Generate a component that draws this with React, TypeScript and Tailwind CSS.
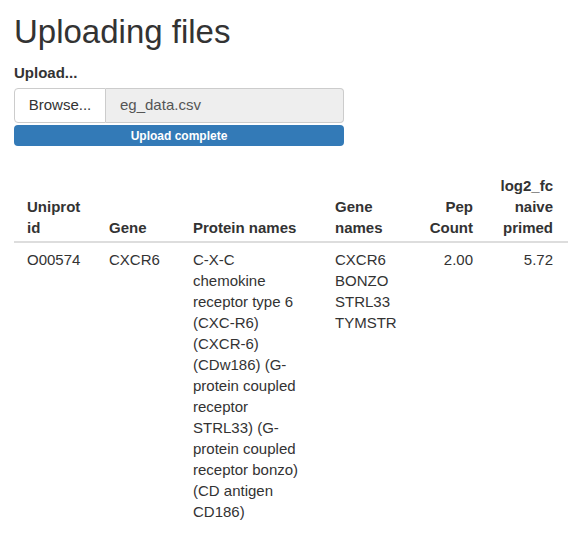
export default function App() {
  const font = { fontFamily: '"Liberation Sans", Arial, sans-serif' }
  return (
    <div className="min-h-[536px] w-[568px] overflow-hidden bg-white text-[15px] text-[#333]" style={font}>
      <div className="pl-[14px]">
        <h1 className="pt-[14px] text-[33px] leading-[36px] font-normal text-[#333]">Uploading files</h1>

        <div className="mt-[12px] w-[330px]">
          <div className="font-bold leading-[21px]">Upload...</div>
          <div className="mt-[5px] flex h-[35px]">
            <div className="flex w-[92px] items-center justify-center rounded-l-[4px] border border-[#ccc] bg-white text-[#333]">
              Browse...
            </div>
            <div className="flex flex-1 items-center rounded-r-[4px] border border-l-0 border-[#ccc] bg-[#eee] pl-[14px] text-[#555]">
              eg_data.csv
            </div>
          </div>
          <div className="mt-[2px] flex h-[21px] items-center justify-center rounded-[4px] bg-[#337ab7] text-[12px] font-bold text-white">
            Upload complete
          </div>
        </div>

        <table className="mt-[23px] w-[554px] table-fixed border-collapse leading-[21px]">
          <colgroup>
            <col className="w-[82px]" />
            <col className="w-[84px]" />
            <col className="w-[142px]" />
            <col className="w-[86px]" />
            <col className="w-[78px]" />
            <col className="w-[82px]" />
          </colgroup>
          <thead>
            <tr className="border-b-2 border-[#ddd] align-bottom font-bold">
              <th className="px-[13px] pb-[3px] pt-[6px] text-left">Uniprot id</th>
              <th className="px-[13px] pb-[3px] pt-[6px] text-left">Gene</th>
              <th className="px-[13px] pb-[3px] pt-[6px] text-left">Protein names</th>
              <th className="px-[13px] pb-[3px] pt-[6px] text-left">Gene names</th>
              <th className="px-[13px] pb-[3px] pt-[6px] text-right">Pep Count</th>
              <th className="pl-[13px] pr-[15px] pb-[3px] pt-[6px] text-right">log2_fc naive primed</th>
            </tr>
          </thead>
          <tbody>
            <tr className="align-top">
              <td className="px-[13px] pt-[6px]">O00574</td>
              <td className="px-[13px] pt-[6px]">CXCR6</td>
              <td className="px-[13px] pt-[6px]">
                C-X-C chemokine receptor type 6 (CXC-R6) (CXCR-6) (CDw186) (G-protein coupled receptor STRL33) (G-protein coupled
                receptor bonzo) (CD antigen CD186)
              </td>
              <td className="px-[13px] pt-[6px]">CXCR6 BONZO STRL33 TYMSTR</td>
              <td className="px-[13px] pt-[6px] text-right">2.00</td>
              <td className="pl-[13px] pr-[15px] pt-[6px] text-right">5.72</td>
            </tr>
          </tbody>
        </table>
      </div>
    </div>
  )
}
